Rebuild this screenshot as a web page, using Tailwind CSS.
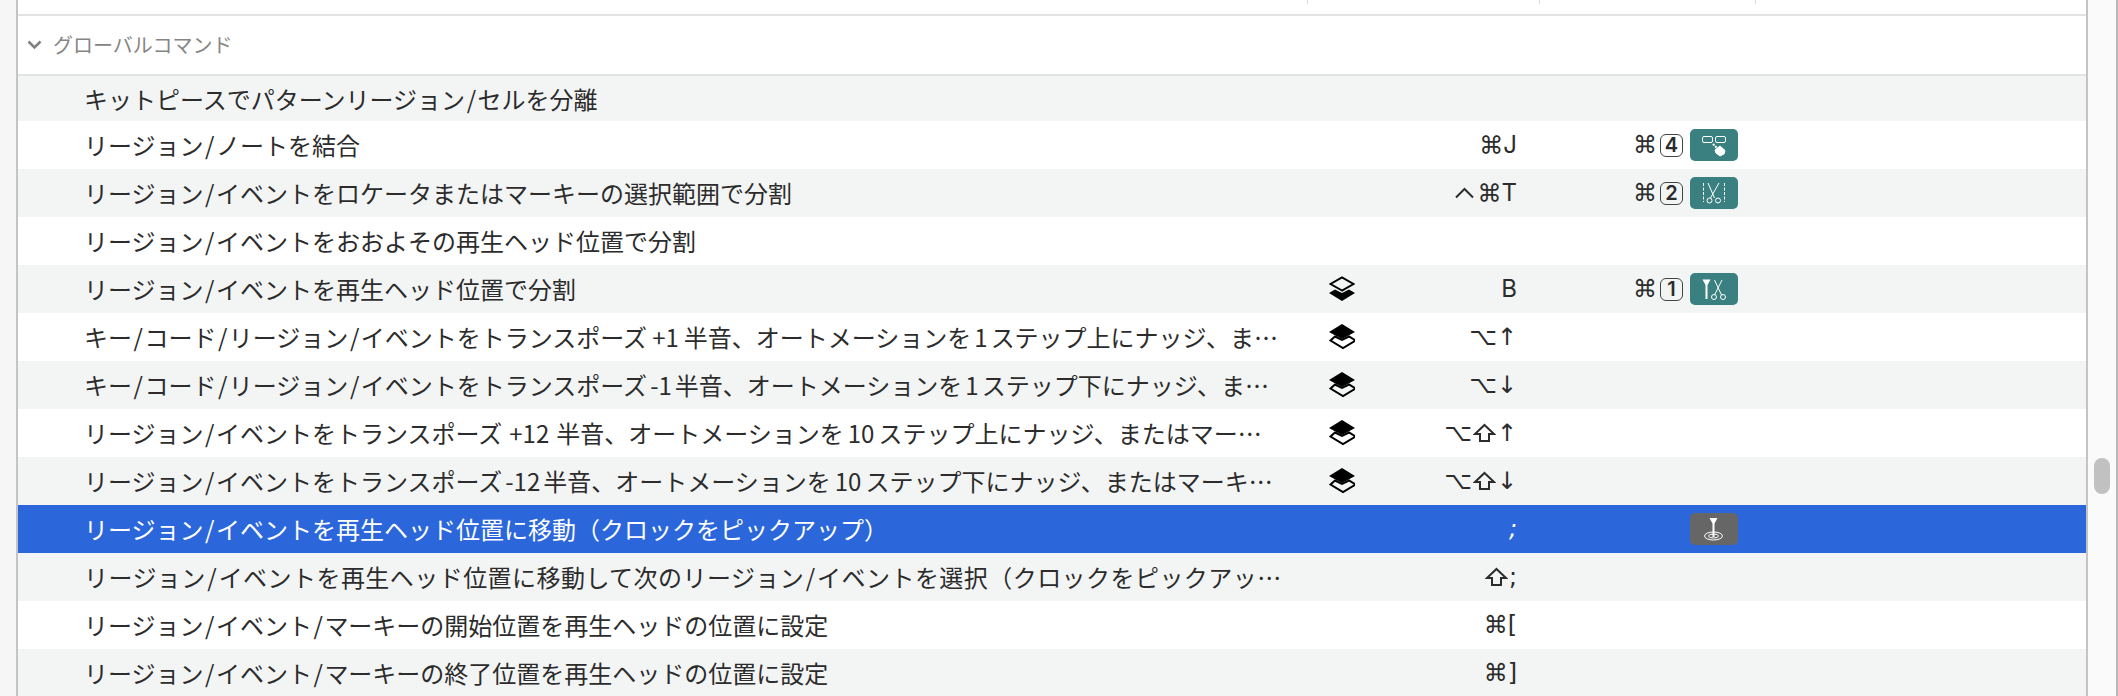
<!DOCTYPE html>
<html lang="ja">
<head>
<meta charset="UTF-8">
<title>キーコマンド</title>
<script src="https://cdn.jsdelivr.net/npm/@tailwindcss/browser@4"></script>
</head>
<body class="bg-[#f6f6f6] overflow-hidden font-['Noto_Sans_CJK_JP',sans-serif] text-[24px] text-[#2c2c2c]">
<div class="h-[696px] flex">
  <div class="w-[16px] shrink-0 bg-[#f6f6f6]"></div>

  <!-- list -->
  <div class="w-[2072px] shrink-0 border-x-2 border-x-[#c4c4c4] bg-white flex flex-col overflow-hidden">
    <!-- column ticks -->
    <div class="h-[14px] shrink-0 bg-white relative">
      <div class="absolute top-0 left-[1289px] w-[1px] h-[4px] bg-[#ddd]"></div>
      <div class="absolute top-0 left-[1521px] w-[1px] h-[4px] bg-[#ddd]"></div>
      <div class="absolute top-0 left-[1737px] w-[1px] h-[4px] bg-[#ddd]"></div>
    </div>
    <div class="h-[2px] shrink-0 bg-[#e3e3e3]"></div>

    <!-- section header -->
    <div class="h-[60px] shrink-0 flex items-center pl-[9px] border-b-2 border-b-[#e3e3e3] text-[20px] text-[#858585]">
      <svg class="w-[15px] h-[10px]" viewBox="0 0 15 10" fill="none" stroke="#808080" stroke-width="2.500"><path d="M1.500 1.500l6 6 6-6"/></svg>
      <span class="ml-[11px]">グローバルコマンド</span>
    </div>

    <!-- rows -->
    <div class="h-[45px] shrink-0 flex items-center bg-[#f3f5f5]">
      <div class="w-[1294px] pl-[66px] pr-[28px] truncate">キットピースでパターンリージョン<span class="mx-[1.5px]">/</span>セルを分離</div>
    </div>

    <div class="h-[48px] shrink-0 flex items-center bg-white">
      <div class="w-[1294px] pl-[66px] pr-[28px] truncate">リージョン<span class="mx-[1.5px]">/</span>ノートを結合</div>
      <div class="w-[60px]"></div>
      <div class="w-[145px] text-right font-['Inter','DejaVu_Sans',sans-serif]">⌘J</div>
      <div class="w-[166px] flex justify-end items-center gap-[3px] font-['DejaVu_Sans',sans-serif]">⌘<span class="w-[23px] h-[23px] flex items-center justify-center rounded-[6px] border border-[#444] font-['Inter',sans-serif] text-[20px] font-semibold">4</span></div>
      <div class="ml-[7px] w-[48px] h-[32px] rounded-[5px] bg-[#3a8080]">
        <svg width="48" height="32" viewBox="0 0 48 32" fill="none" stroke="#fff" stroke-width="1"><rect x="12.500" y="7.500" width="10" height="6" rx="1.500"/><rect x="25.500" y="7.500" width="10" height="6" rx="1.500"/><path d="M23 15l5 5" stroke-width="2" stroke-dasharray="2 1"/><path d="M30 17l5 4.500-1 3.500-4 2-4-3-1-3z" fill="#fff"/></svg>
      </div>
    </div>

    <div class="h-[48px] shrink-0 flex items-center bg-[#f3f5f5]">
      <div class="w-[1294px] pl-[66px] pr-[28px] truncate">リージョン<span class="mx-[1.5px]">/</span>イベントをロケータまたはマーキーの選択範囲で分割</div>
      <div class="w-[60px]"></div>
      <div class="w-[145px] flex justify-end items-center font-['Inter','DejaVu_Sans',sans-serif]">
        <svg class="mr-[3px]" width="19" height="12" viewBox="0 0 19 12" fill="none" stroke="#2c2c2c" stroke-width="2"><path d="M1 10.500l8.500-8.500 8.500 8.500"/></svg><span>⌘T</span>
      </div>
      <div class="w-[166px] flex justify-end items-center gap-[3px] font-['DejaVu_Sans',sans-serif]">⌘<span class="w-[23px] h-[23px] flex items-center justify-center rounded-[6px] border border-[#444] font-['Inter',sans-serif] text-[20px] font-semibold">2</span></div>
      <div class="ml-[7px] w-[48px] h-[32px] rounded-[5px] bg-[#3a8080]">
        <svg width="48" height="32" viewBox="0 0 48 32" fill="none" stroke="#fff" stroke-width="1"><path d="M13.500 6v19M34.500 6v19" stroke-dasharray="3 1.500"/><path d="M18 6l6.500 15M29 6l-8.500 15"/><circle cx="19.500" cy="23.500" r="2.500"/><circle cx="28" cy="23.500" r="2.500"/></svg>
      </div>
    </div>

    <div class="h-[48px] shrink-0 flex items-center bg-white">
      <div class="w-[1294px] pl-[66px] pr-[28px] truncate">リージョン<span class="mx-[1.5px]">/</span>イベントをおおよその再生ヘッド位置で分割</div>
    </div>

    <div class="h-[48px] shrink-0 flex items-center bg-[#f3f5f5]">
      <div class="w-[1294px] pl-[66px] pr-[28px] truncate">リージョン<span class="mx-[1.5px]">/</span>イベントを再生ヘッド位置で分割</div>
      <div class="w-[60px] flex justify-center">
        <svg width="26" height="26" viewBox="0 0 26 26"><path d="M13 14.500L1.500 8 13 1.500 24.500 8z" fill="none" stroke="#000" stroke-width="2"/><path d="M6 13.500l7 3.500 7-3.500 6 3.500-13 8-13-8z" fill="#000"/></svg>
      </div>
      <div class="w-[145px] text-right font-['Inter','DejaVu_Sans',sans-serif]">B</div>
      <div class="w-[166px] flex justify-end items-center gap-[3px] font-['DejaVu_Sans',sans-serif]">⌘<span class="w-[23px] h-[23px] flex items-center justify-center rounded-[6px] border border-[#444] font-['Inter',sans-serif] text-[20px] font-semibold">1</span></div>
      <div class="ml-[7px] w-[48px] h-[32px] rounded-[5px] bg-[#3a8080]">
        <svg width="48" height="32" viewBox="0 0 48 32" fill="none" stroke="#fff" stroke-width="1"><path d="M12.500 6.500h8l-3 5.500v14h-2V12z" fill="#fff" stroke="none"/><path d="M24.500 7l7 15M32 7l-7.500 15"/><circle cx="24" cy="24" r="2.500"/><circle cx="33" cy="24" r="2.500"/></svg>
      </div>
    </div>

    <div class="h-[48px] shrink-0 flex items-center bg-white">
      <div class="w-[1294px] pl-[66px] pr-[28px] truncate">キー<span class="mx-[1.5px]">/</span>コード<span class="mx-[1.5px]">/</span>リージョン<span class="mx-[1.5px]">/</span>イベントをトランスポーズ<span class="mx-[5px]">+1</span>半音、オートメーションを<span class="mx-[3px]">1</span>ステップ上にナッジ、またはマーキーの範囲を移動</div>
      <div class="w-[60px] flex justify-center">
        <svg width="26" height="26" viewBox="0 0 26 26"><path d="M6 12.500l7 3.500 7-3.500 6.500 4-12.500 7.500-12.500-7.500z" fill="none" stroke="#000" stroke-width="2"/><path d="M13 15L0 8l13-8 13 8z" fill="#000"/></svg>
      </div>
      <div class="w-[145px] text-right font-['DejaVu_Sans',sans-serif]">⌥↑</div>
    </div>

    <div class="h-[48px] shrink-0 flex items-center bg-[#f3f5f5]">
      <div class="w-[1294px] pl-[66px] pr-[28px] truncate">キー<span class="mx-[1.5px]">/</span>コード<span class="mx-[1.5px]">/</span>リージョン<span class="mx-[1.5px]">/</span>イベントをトランスポーズ<span class="mx-[3px]">-1</span>半音、オートメーションを<span class="mx-[3px]">1</span>ステップ下にナッジ、またはマーキーの範囲を移動</div>
      <div class="w-[60px] flex justify-center">
        <svg width="26" height="26" viewBox="0 0 26 26"><path d="M6 12.500l7 3.500 7-3.500 6.500 4-12.500 7.500-12.500-7.500z" fill="none" stroke="#000" stroke-width="2"/><path d="M13 15L0 8l13-8 13 8z" fill="#000"/></svg>
      </div>
      <div class="w-[145px] text-right font-['DejaVu_Sans',sans-serif]">⌥↓</div>
    </div>

    <div class="h-[48px] shrink-0 flex items-center bg-white">
      <div class="w-[1294px] pl-[66px] pr-[28px] truncate">リージョン<span class="mx-[1.5px]">/</span>イベントをトランスポーズ<span class="mx-[7px]">+12</span>半音、オートメーションを<span class="mx-[4px]">10</span>ステップ上にナッジ、またはマーキーの範囲を移動</div>
      <div class="w-[60px] flex justify-center">
        <svg width="26" height="26" viewBox="0 0 26 26"><path d="M6 12.500l7 3.500 7-3.500 6.500 4-12.500 7.500-12.500-7.500z" fill="none" stroke="#000" stroke-width="2"/><path d="M13 15L0 8l13-8 13 8z" fill="#000"/></svg>
      </div>
      <div class="w-[145px] flex justify-end items-center font-['DejaVu_Sans',sans-serif]"><span>⌥</span>
        <svg class="mx-[1px]" width="23" height="20" viewBox="0 0 23 20" fill="none" stroke="#2c2c2c" stroke-width="2"><path d="M11.500 2L21 11h-5v7H7v-7H2z"/></svg><span>↑</span>
      </div>
    </div>

    <div class="h-[48px] shrink-0 flex items-center bg-[#f3f5f5]">
      <div class="w-[1294px] pl-[66px] pr-[28px] truncate">リージョン<span class="mx-[1.5px]">/</span>イベントをトランスポーズ<span class="mx-[3px]">-12</span>半音、オートメーションを<span class="mx-[4px]">10</span>ステップ下にナッジ、またはマーキーの範囲を移動</div>
      <div class="w-[60px] flex justify-center">
        <svg width="26" height="26" viewBox="0 0 26 26"><path d="M6 12.500l7 3.500 7-3.500 6.500 4-12.500 7.500-12.500-7.500z" fill="none" stroke="#000" stroke-width="2"/><path d="M13 15L0 8l13-8 13 8z" fill="#000"/></svg>
      </div>
      <div class="w-[145px] flex justify-end items-center font-['DejaVu_Sans',sans-serif]"><span>⌥</span>
        <svg class="mx-[1px]" width="23" height="20" viewBox="0 0 23 20" fill="none" stroke="#2c2c2c" stroke-width="2"><path d="M11.500 2L21 11h-5v7H7v-7H2z"/></svg><span>↓</span>
      </div>
    </div>

    <!-- selected row -->
    <div class="h-[48px] shrink-0 flex items-center bg-[#2b67db] text-white">
      <div class="w-[1294px] pl-[66px] pr-[28px] truncate">リージョン<span class="mx-[1.5px]">/</span>イベントを再生ヘッド位置に移動（クロックをピックアップ）</div>
      <div class="w-[60px]"></div>
      <div class="w-[145px] text-right italic font-['DejaVu_Sans',sans-serif]">;</div>
      <div class="w-[166px]"></div>
      <div class="ml-[7px] w-[48px] h-[32px] rounded-[5px] bg-[#666666]">
        <svg width="48" height="32" viewBox="0 0 48 32" fill="none" stroke="#fff" stroke-width="1"><path d="M19.500 5h8l-3 5.500V24h-2V10.500z" fill="#fff" stroke="none"/><ellipse cx="23.500" cy="23" rx="9" ry="4"/><ellipse cx="23.500" cy="23" rx="5" ry="2"/></svg>
      </div>
    </div>

    <div class="h-[48px] shrink-0 flex items-center bg-[#f3f5f5]">
      <div class="w-[1294px] pl-[66px] pr-[28px] truncate tracking-[0.45px]">リージョン<span class="mx-[1.5px]">/</span>イベントを再生ヘッド位置に移動して次のリージョン<span class="mx-[1.5px]">/</span>イベントを選択（クロックをピックアップ）</div>
      <div class="w-[60px]"></div>
      <div class="w-[145px] flex justify-end items-center font-['DejaVu_Sans',sans-serif]">
        <svg class="mr-[1px]" width="23" height="20" viewBox="0 0 23 20" fill="none" stroke="#2c2c2c" stroke-width="2"><path d="M11.500 2L21 11h-5v7H7v-7H2z"/></svg><span>;</span>
      </div>
    </div>

    <div class="h-[48px] shrink-0 flex items-center bg-white">
      <div class="w-[1294px] pl-[66px] pr-[28px] truncate">リージョン<span class="mx-[1.5px]">/</span>イベント<span class="mx-[1.5px]">/</span>マーキーの開始位置を再生ヘッドの位置に設定</div>
      <div class="w-[60px]"></div>
      <div class="w-[145px] text-right font-['DejaVu_Sans',sans-serif]">⌘[</div>
    </div>

    <div class="h-[48px] shrink-0 flex items-center bg-[#f3f5f5]">
      <div class="w-[1294px] pl-[66px] pr-[28px] truncate">リージョン<span class="mx-[1.5px]">/</span>イベント<span class="mx-[1.5px]">/</span>マーキーの終了位置を再生ヘッドの位置に設定</div>
      <div class="w-[60px]"></div>
      <div class="w-[145px] text-right font-['DejaVu_Sans',sans-serif]">⌘]</div>
    </div>
  </div>

  <!-- scrollbar -->
  <div class="flex-1 bg-[#fafafa] border-r-2 border-r-[#b8b8b8] relative">
    <div class="absolute left-[6px] top-[458px] w-[16px] h-[36px] rounded-full bg-[#c1c1c1]"></div>
  </div>
</div>
</body>
</html>
